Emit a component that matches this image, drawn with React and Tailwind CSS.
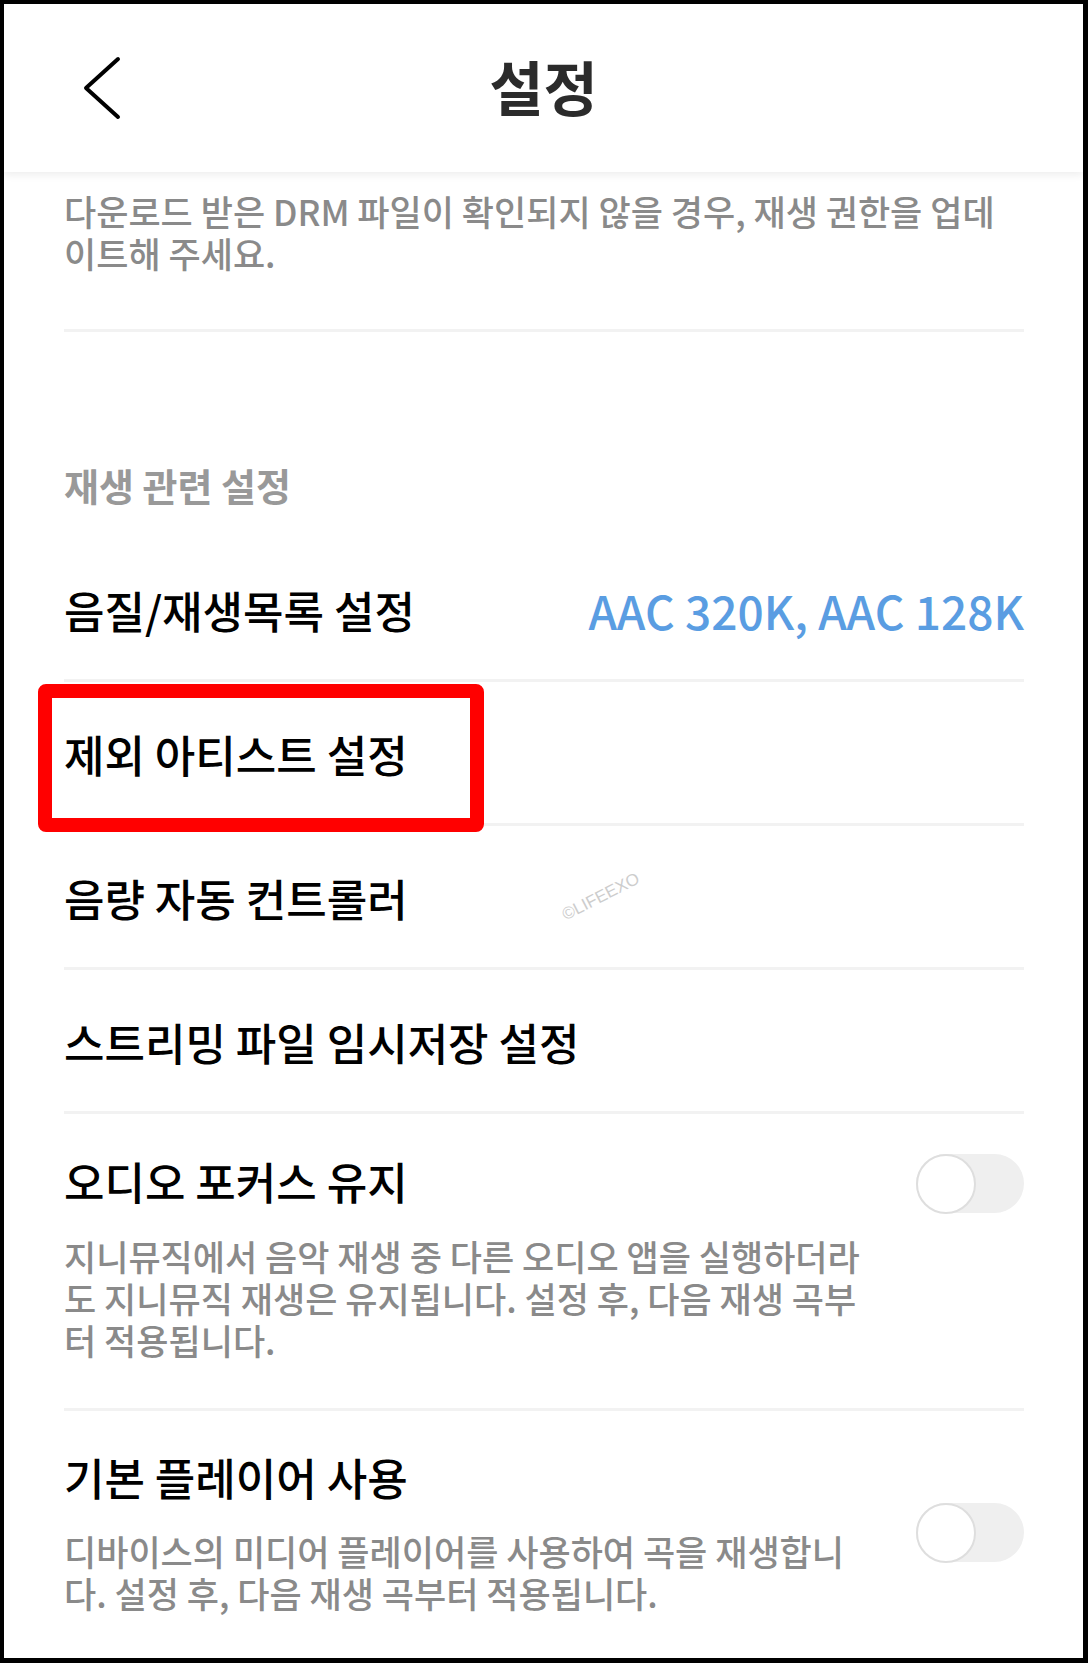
import React from 'react'

const Toggle = ({ className = '' }) => (
  <div className={`w-[108px] h-[59px] rounded-full bg-[#efefef] flex items-center shrink-0 ${className}`}>
    <div className="w-[60px] h-[60px] rounded-full bg-white border-2 border-[#dedede]" />
  </div>
)

const Row = ({ children, className = '' }) => (
  <div className={`h-[144px] pt-[3px] border-b-[3px] border-[#f2f2f2] flex items-center justify-between ${className}`}>
    {children}
  </div>
)

const App = () => {
  return (
    <div className="w-[1088px] h-[1663px] bg-black pt-[4px] pl-[4px] pr-[5px] pb-[5px] font-['Noto_Sans_CJK_KR',sans-serif]">
      <div className="h-full bg-white relative overflow-hidden flex flex-col">
        {/* header */}
        <div className="h-[168px] shrink-0 relative z-10 bg-white shadow-[0_3px_8px_rgba(0,0,0,0.07)] grid grid-cols-[1fr_auto_1fr] items-center">
          <div className="pl-[78px] flex items-center">
            <svg width="40" height="66" viewBox="0 0 40 66" fill="none">
              <polyline points="36,4 4,33 36,62" stroke="#000" strokeWidth="4" strokeLinecap="round" strokeLinejoin="round" />
            </svg>
          </div>
          <h1 className="text-[59px] leading-none font-bold text-[#2b2b2b] pb-[6px]">설정</h1>
          <div />
        </div>

        {/* content */}
        <div className="flex-1 px-[60px] pr-[59px] text-black">
          <div className="pt-[18px] pb-[55px] border-b-[3px] border-[#f2f2f2]">
            <p className="text-[35px] leading-[42px] font-medium text-[#8a8a8a] whitespace-nowrap">
              다운로드 받은 DRM 파일이 확인되지 않을 경우, 재생 권한을 업데<br />이트해 주세요.
            </p>
          </div>

          <div className="pt-[133px] mb-[33px] text-[38px] leading-[40px] font-bold text-[#999999]">재생 관련 설정</div>

          <Row>
            <span className="text-[44px] leading-[48px] font-medium">음질/재생목록 설정</span>
            <span className="text-[46px] leading-[48px] font-medium text-[#5a9de2]">AAC 320K, AAC 128K</span>
          </Row>
          <Row className="relative">
            <span className="text-[44px] leading-[48px] font-medium">제외 아티스트 설정</span>
            <div className="absolute left-[-26px] top-[2px] w-[446px] h-[148px] border-[14px] border-[#ff0000] rounded-[8px] z-10" />
          </Row>
          <Row>
            <span className="text-[44px] leading-[48px] font-medium">음량 자동 컨트롤러</span>
          </Row>
          <Row>
            <span className="text-[44px] leading-[48px] font-medium">스트리밍 파일 임시저장 설정</span>
          </Row>

          <div className="pt-[43px] pb-[47px] border-b-[3px] border-[#f2f2f2] flex justify-between items-start">
            <div>
              <div className="text-[44px] leading-[48px] font-medium">오디오 포커스 유지</div>
              <p className="mt-[30px] text-[35px] leading-[42px] font-medium text-[#8a8a8a] whitespace-nowrap">
                지니뮤직에서 음악 재생 중 다른 오디오 앱을 실행하더라<br />
                도 지니뮤직 재생은 유지됩니다. 설정 후, 다음 재생 곡부<br />
                터 적용됩니다.
              </p>
            </div>
            <Toggle className="mt-[-3px]" />
          </div>

          <div className="pt-[42px] pb-[44px] flex justify-between items-start">
            <div>
              <div className="text-[44px] leading-[48px] font-medium">기본 플레이어 사용</div>
              <p className="mt-[29px] text-[35px] leading-[42px] font-medium text-[#8a8a8a] whitespace-nowrap">
                디바이스의 미디어 플레이어를 사용하여 곡을 재생합니<br />
                다. 설정 후, 다음 재생 곡부터 적용됩니다.
              </p>
            </div>
            <Toggle className="mt-[50px]" />
          </div>
        </div>

        {/* watermark */}
        <div className="absolute left-[548px] top-[882px] w-[98px] text-center text-[17px] leading-[22px] text-[#cdcdcd] font-light -rotate-[27deg] font-['Liberation_Sans',sans-serif]">
          ©LIFEEXO
        </div>
      </div>
    </div>
  )
}

export default App
